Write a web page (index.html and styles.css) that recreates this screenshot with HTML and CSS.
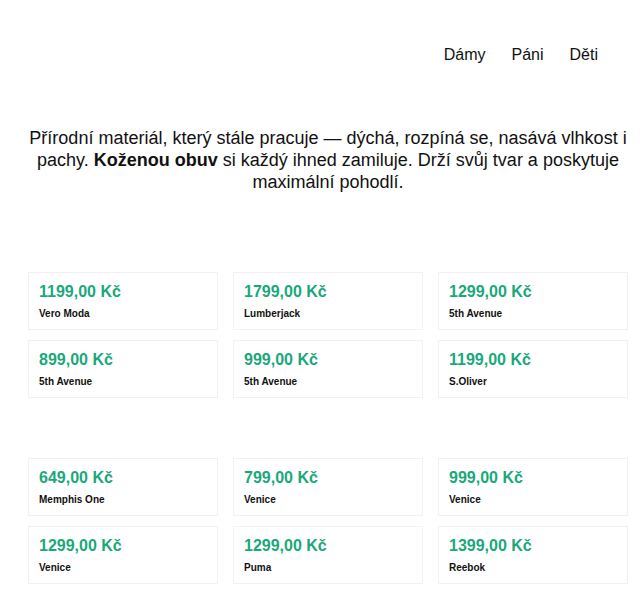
FILE: index.html
```html
<!DOCTYPE html>
<html lang="cs">
<head>
    <meta charset="UTF-8">
    <meta name="viewport" content="width=device-width, initial-scale=1.0">
    <title>Kožená obuv</title>
    <link rel="stylesheet" href="styles.css">
</head>
<body>
    <header class="top-bar">
        <nav class="main-nav">
            <a href="#">Dámy</a>
            <a href="#">Páni</a>
            <a href="#">Děti</a>
        </nav>
    </header>

    <div class="page">
        <p class="intro">Přírodní materiál, který stále pracuje — dýchá, rozpíná se, nasává vlhkost i pachy. <strong>Koženou obuv</strong> si každý ihned zamiluje. Drží svůj tvar a poskytuje maximální pohodlí.</p>

        <section class="products">
            <div class="card"><div class="price">1199,00 Kč</div><div class="brand">Vero Moda</div></div>
            <div class="card"><div class="price">1799,00 Kč</div><div class="brand">Lumberjack</div></div>
            <div class="card"><div class="price">1299,00 Kč</div><div class="brand">5th Avenue</div></div>
            <div class="card"><div class="price">899,00 Kč</div><div class="brand">5th Avenue</div></div>
            <div class="card"><div class="price">999,00 Kč</div><div class="brand">5th Avenue</div></div>
            <div class="card"><div class="price">1199,00 Kč</div><div class="brand">S.Oliver</div></div>
        </section>

        <section class="products">
            <div class="card"><div class="price">649,00 Kč</div><div class="brand">Memphis One</div></div>
            <div class="card"><div class="price">799,00 Kč</div><div class="brand">Venice</div></div>
            <div class="card"><div class="price">999,00 Kč</div><div class="brand">Venice</div></div>
            <div class="card"><div class="price">1299,00 Kč</div><div class="brand">Venice</div></div>
            <div class="card"><div class="price">1299,00 Kč</div><div class="brand">Puma</div></div>
            <div class="card"><div class="price">1399,00 Kč</div><div class="brand">Reebok</div></div>
        </section>
    </div>
</body>
</html>
```

FILE: styles.css
```css
body {
    font-family: 'Liberation Sans', Arial, sans-serif;
    background-color: #fff;
    color: #111;
    margin: 0;
    padding: 0;
}
.top-bar {
    padding-top: 46px;
    padding-right: 42px;
}
.main-nav {
    display: flex;
    justify-content: flex-end;
    gap: 26px;
}
.main-nav a {
    color: #111;
    text-decoration: none;
    font-size: 16px;
    line-height: 18px;
}
.page {
    width: 600px;
    padding-left: 28px;
}
.intro {
    margin: 63px 0 79px;
    text-align: center;
    font-size: 18px;
    line-height: 22px;
}
.products {
    display: grid;
    grid-template-columns: repeat(3, 1fr);
    gap: 10px 15px;
    margin-bottom: 60px;
}
.card {
    border: 1px solid #f1f1f1;
    padding: 10px 10px 9px;
}
.price {
    color: #1aa87a;
    font-size: 16px;
    font-weight: 700;
    line-height: 18px;
}
.brand {
    margin-top: 7px;
    font-size: 10px;
    font-weight: 700;
    line-height: 12px;
}
```
